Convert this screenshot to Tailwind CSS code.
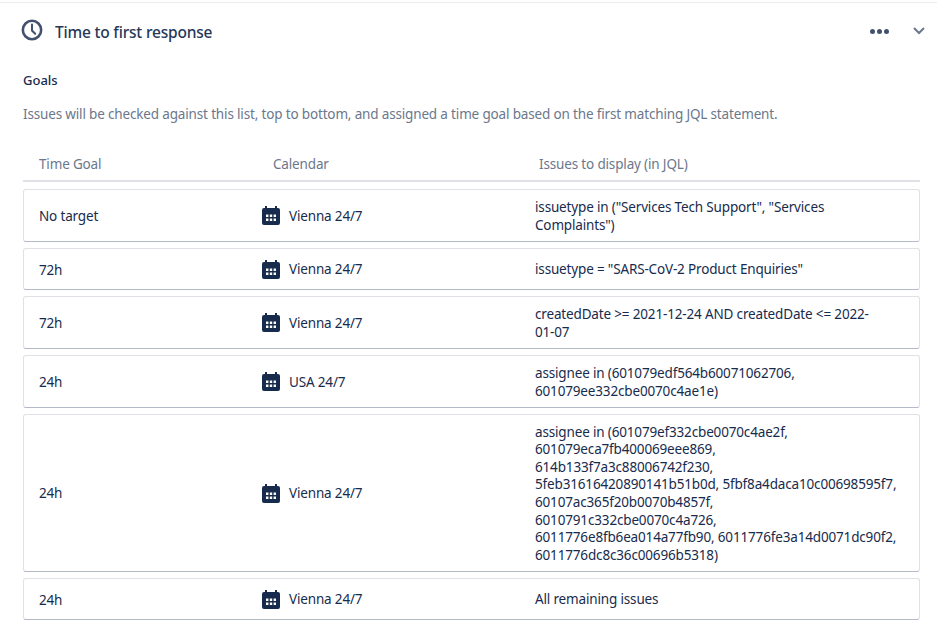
<!DOCTYPE html>
<html lang="en">
<head>
    <meta charset="UTF-8">
    <meta name="viewport" content="width=device-width, initial-scale=1.0">
    <title>Time to first response</title>
    <script src="https://cdn.jsdelivr.net/npm/@tailwindcss/browser@4"></script>
</head>
<body class="bg-white h-[630px] overflow-hidden font-['Noto_Sans',sans-serif] text-[13.5px] tracking-[-0.16px] text-[#172b4d]">
    <div class="h-[3px] border-b border-[#ebecf0]"></div>

    <!-- header -->
    <div class="flex items-center h-[55px] pl-[21px] pr-[11px]">
        <svg class="w-[22px] h-[22px] text-[#42526e] -mt-[2px]" viewBox="0 0 24 24" fill="none" stroke="currentColor" stroke-width="2.8">
            <circle cx="12" cy="12" r="10"/>
            <path d="M12 6v6.5l3.5 3.5" stroke-width="2.2" stroke-linecap="round"/>
        </svg>
        <h2 class="ml-[12px] mt-[4px] text-[15.5px] tracking-[-0.2px] font-medium text-[#253858]">Time to first response</h2>
        <div class="ml-auto mt-[1px] flex items-center gap-[2px]">
            <span class="w-[5px] h-[5px] rounded-full bg-[#42526e]"></span>
            <span class="w-[5px] h-[5px] rounded-full bg-[#42526e]"></span>
            <span class="w-[5px] h-[5px] rounded-full bg-[#42526e]"></span>
        </div>
        <svg class="ml-[23px] mt-[1px] w-[14px] h-[10px] text-[#6b778c]" viewBox="0 0 14 10" fill="none" stroke="currentColor" stroke-width="2">
            <path d="M2 2l5 5 5-5"/>
        </svg>
    </div>

    <div class="pl-[23px]">
        <h3 class="mt-[13px] text-[13px] tracking-normal font-medium leading-[18px]">Goals</h3>
        <p class="mt-[16px] leading-[18px] text-[#6b778c]">Issues will be checked against this list, top to bottom, and assigned a time goal based on the first matching JQL statement.</p>

        <!-- table head -->
        <div class="mt-[24px] w-[897px] flex h-[35px] pt-[2px] items-center border-b-2 border-[#dfe1e6] text-[#6b778c]">
            <div class="w-[250px] pl-[16px]">Time Goal</div>
            <div class="w-[266px]">Calendar</div>
            <div>Issues to display (in JQL)</div>
        </div>

        <div class="mt-[7px] w-[897px] flex flex-col gap-[6px]">
            <div class="flex items-center h-[53px] bg-white border border-[#dfe1e6] border-b-[#b3bac5] rounded-[3px]">
                <div class="w-[238px] pl-[15px] pt-[2px]">No target</div>
                <div class="w-[273px] flex items-center"><svg class="w-[18px] h-[19px] text-[#172b4d]" viewBox="0 0 18 19"><path fill="currentColor" fill-rule="evenodd" d="M3 0h2v2h8V0h2v2h1a2 2 0 0 1 2 2v13a2 2 0 0 1-2 2H2a2 2 0 0 1-2-2V4a2 2 0 0 1 2-2h1zM4 8.500h2.400v2.400H4zm3.800 0h2.400v2.400H7.800zm3.800 0H14v2.400h-2.400zM4 12.500h2.400v2.400H4zm3.800 0h2.400v2.400H7.800zm3.800 0H14v2.400h-2.400z"/></svg><span class="ml-[9px] pt-[2px]">Vienna 24/7</span></div>
                <div class="w-[365px] pt-[2px] leading-[17.6px]">issuetype in ("Services Tech Support", "Services<br>Complaints")</div>
            </div>
            <div class="flex items-center h-[42px] bg-white border border-[#dfe1e6] border-b-[#b3bac5] rounded-[3px]">
                <div class="w-[238px] pl-[15px] pt-[2px]">72h</div>
                <div class="w-[273px] flex items-center"><svg class="w-[18px] h-[19px] text-[#172b4d]" viewBox="0 0 18 19"><path fill="currentColor" fill-rule="evenodd" d="M3 0h2v2h8V0h2v2h1a2 2 0 0 1 2 2v13a2 2 0 0 1-2 2H2a2 2 0 0 1-2-2V4a2 2 0 0 1 2-2h1zM4 8.500h2.400v2.400H4zm3.800 0h2.400v2.400H7.800zm3.800 0H14v2.400h-2.400zM4 12.500h2.400v2.400H4zm3.800 0h2.400v2.400H7.800zm3.800 0H14v2.400h-2.400z"/></svg><span class="ml-[9px]">Vienna 24/7</span></div>
                <div class="w-[365px] pt-[2px] leading-[17.6px]">issuetype = "SARS-CoV-2 Product Enquiries"</div>
            </div>
            <div class="flex items-center h-[53px] bg-white border border-[#dfe1e6] border-b-[#b3bac5] rounded-[3px]">
                <div class="w-[238px] pl-[15px] pt-[2px]">72h</div>
                <div class="w-[273px] flex items-center"><svg class="w-[18px] h-[19px] text-[#172b4d]" viewBox="0 0 18 19"><path fill="currentColor" fill-rule="evenodd" d="M3 0h2v2h8V0h2v2h1a2 2 0 0 1 2 2v13a2 2 0 0 1-2 2H2a2 2 0 0 1-2-2V4a2 2 0 0 1 2-2h1zM4 8.500h2.400v2.400H4zm3.800 0h2.400v2.400H7.800zm3.800 0H14v2.400h-2.400zM4 12.500h2.400v2.400H4zm3.800 0h2.400v2.400H7.800zm3.800 0H14v2.400h-2.400z"/></svg><span class="ml-[9px] pt-[2px]">Vienna 24/7</span></div>
                <div class="w-[365px] pt-[2px] leading-[17.6px]">createdDate &gt;= 2021-12-24 AND createdDate &lt;= 2022-<br>01-07</div>
            </div>
            <div class="flex items-center h-[53px] bg-white border border-[#dfe1e6] border-b-[#b3bac5] rounded-[3px]">
                <div class="w-[238px] pl-[15px] pt-[2px]">24h</div>
                <div class="w-[273px] flex items-center"><svg class="w-[18px] h-[19px] text-[#172b4d]" viewBox="0 0 18 19"><path fill="currentColor" fill-rule="evenodd" d="M3 0h2v2h8V0h2v2h1a2 2 0 0 1 2 2v13a2 2 0 0 1-2 2H2a2 2 0 0 1-2-2V4a2 2 0 0 1 2-2h1zM4 8.500h2.400v2.400H4zm3.800 0h2.400v2.400H7.800zm3.800 0H14v2.400h-2.400zM4 12.500h2.400v2.400H4zm3.800 0h2.400v2.400H7.800zm3.800 0H14v2.400h-2.400z"/></svg><span class="ml-[9px] pt-[2px]">USA 24/7</span></div>
                <div class="w-[365px] pt-[2px] leading-[17.6px]">assignee in (601079edf564b60071062706,<br>601079ee332cbe0070c4ae1e)</div>
            </div>
            <div class="flex items-center h-[158px] bg-white border border-[#dfe1e6] border-b-[#b3bac5] rounded-[3px]">
                <div class="w-[238px] pl-[15px]">24h</div>
                <div class="w-[273px] flex items-center"><svg class="w-[18px] h-[19px] text-[#172b4d]" viewBox="0 0 18 19"><path fill="currentColor" fill-rule="evenodd" d="M3 0h2v2h8V0h2v2h1a2 2 0 0 1 2 2v13a2 2 0 0 1-2 2H2a2 2 0 0 1-2-2V4a2 2 0 0 1 2-2h1zM4 8.500h2.400v2.400H4zm3.800 0h2.400v2.400H7.800zm3.800 0H14v2.400h-2.400zM4 12.500h2.400v2.400H4zm3.800 0h2.400v2.400H7.800zm3.800 0H14v2.400h-2.400z"/></svg><span class="ml-[9px]">Vienna 24/7</span></div>
                <div class="w-[365px] pt-[2px] leading-[17.6px]">assignee in (601079ef332cbe0070c4ae2f,<br>601079eca7fb400069eee869,<br>614b133f7a3c88006742f230,<br>5feb31616420890141b51b0d, 5fbf8a4daca10c00698595f7,<br>60107ac365f20b0070b4857f,<br>6010791c332cbe0070c4a726,<br>6011776e8fb6ea014a77fb90, 6011776fe3a14d0071dc90f2,<br>6011776dc8c36c00696b5318)</div>
            </div>
            <div class="flex items-center h-[42px] bg-white border border-[#dfe1e6] border-b-[#b3bac5] rounded-[3px]">
                <div class="w-[238px] pl-[15px] pt-[2px]">24h</div>
                <div class="w-[273px] flex items-center"><svg class="w-[18px] h-[19px] text-[#172b4d]" viewBox="0 0 18 19"><path fill="currentColor" fill-rule="evenodd" d="M3 0h2v2h8V0h2v2h1a2 2 0 0 1 2 2v13a2 2 0 0 1-2 2H2a2 2 0 0 1-2-2V4a2 2 0 0 1 2-2h1zM4 8.500h2.400v2.400H4zm3.800 0h2.400v2.400H7.800zm3.800 0H14v2.400h-2.400zM4 12.500h2.400v2.400H4zm3.800 0h2.400v2.400H7.800zm3.800 0H14v2.400h-2.400z"/></svg><span class="ml-[9px]">Vienna 24/7</span></div>
                <div class="w-[365px] pt-[2px] leading-[17.6px]">All remaining issues</div>
            </div>
        </div>
    </div>
</body>
</html>
